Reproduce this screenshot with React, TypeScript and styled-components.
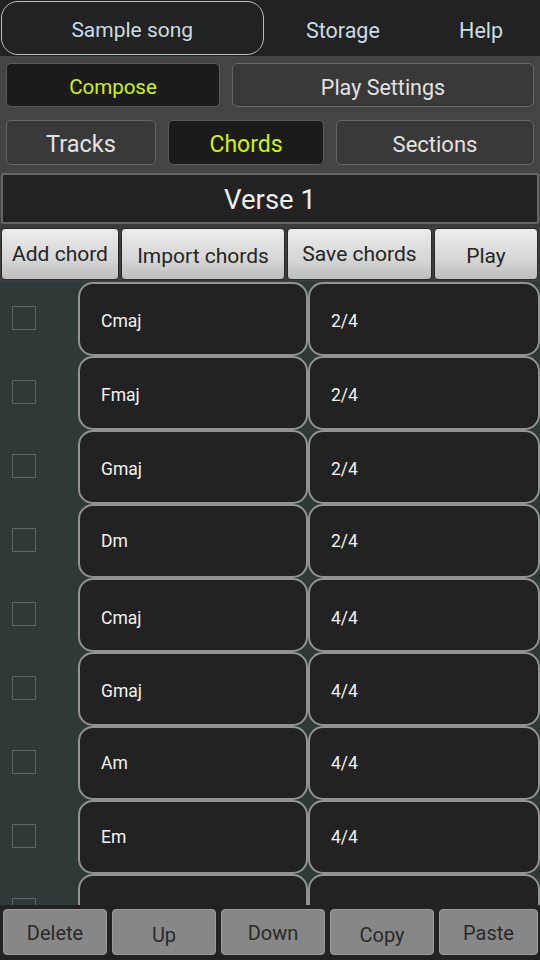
import React from "react";
import styled, { createGlobalStyle } from "styled-components";

const Global = createGlobalStyle`
  html, body { margin: 0; padding: 0; background: #222; }
  body { font-family: Roboto, "Noto Sans", "Liberation Sans", sans-serif; }
  * { box-sizing: border-box; }
`;

const Page = styled.div`
  width: 540px;
  height: 960px;
  display: flex;
  flex-direction: column;
  overflow: hidden;
  background: #222;
`;

const TopBar = styled.div`
  height: 56px;
  display: flex;
  align-items: stretch;
  background: #222;
  flex-shrink: 0;
`;

const SongBox = styled.div`
  width: 263px;
  margin: 1px 0 1px 1px;
  border: 1px solid #b4c0c4;
  border-radius: 17px;
  display: flex;
  align-items: center;
  justify-content: center;
  padding-top: 4px;
  color: #c8dde5;
  font-size: 21px;
`;

const TopItem = styled.div<{ $w: number }>`
  width: ${(p) => p.$w}px;
  display: flex;
  align-items: center;
  justify-content: center;
  padding-top: 5px;
  color: #c8dde5;
  font-size: 21.5px;
`;

const Panel = styled.div`
  background: #444;
  display: flex;
  flex-direction: column;
  flex-shrink: 0;
  padding-top: 7px;
`;

const TabRow = styled.div<{ $gap: number; $mb: number }>`
  display: flex;
  gap: ${(p) => p.$gap}px;
  padding: 0 6px;
  margin-bottom: ${(p) => p.$mb}px;
`;

const Tab = styled.div<{ $active?: boolean; $w?: number; $h: number; $fs: number; $dy: number }>`
  ${(p) => (p.$w ? `width: ${p.$w}px;` : "flex: 1;")}
  height: ${(p) => p.$h}px;
  border-radius: 5px;
  border: 1.5px solid ${(p) => (p.$active ? "#5a5a5a" : "#666")};
  background: ${(p) => (p.$active ? "#1b1b1b" : "#393939")};
  color: ${(p) => (p.$active ? "#d2f20a" : "#e2e2e2")};
  font-size: ${(p) => p.$fs}px;
  display: flex;
  align-items: center;
  justify-content: center;
  padding-top: ${(p) => p.$dy}px;
`;

const VerseBox = styled.div`
  margin: 0 1px;
  height: 51px;
  background: #222;
  border: 2px solid #666;
  border-radius: 3px;
  color: #eee;
  font-size: 27.5px;
  display: flex;
  align-items: center;
  justify-content: center;
  padding-top: 2px;
`;

const ActionRow = styled.div`
  display: flex;
  gap: 2px;
  padding: 4px 2px 2px 1px;
  background: #3c3c3c;
  flex-shrink: 0;
`;

const ActionButton = styled.div<{ $w?: number; $dy: number }>`
  ${(p) => (p.$w ? `width: ${p.$w}px;` : "flex: 1;")}
  height: 52px;
  border-radius: 4px;
  border: 1px solid #2a2a2a;
  background: linear-gradient(#ececec, #d6d6d6 60%, #bdbdbd);
  color: #252525;
  font-size: 21px;
  display: flex;
  align-items: center;
  justify-content: center;
  padding-top: ${(p) => p.$dy}px;
`;

const List = styled.div`
  flex: 1;
  overflow: hidden;
  background: #2e3938;
`;

const Row = styled.div`
  display: grid;
  grid-template-columns: 78px 230px 1fr;
  height: 74px;
`;

const CheckCell = styled.div`
  display: flex;
  align-items: center;
  padding-left: 12px;
  padding-bottom: 3px;
`;

const Checkbox = styled.div`
  width: 24px;
  height: 24px;
  border: 1.5px solid #5b6564;
`;

const Cell = styled.div<{ $pl: number; $dy: number }>`
  border: 2px solid #929292;
  border-radius: 15px;
  background: #222;
  color: #f2f2f2;
  font-size: 17.5px;
  display: flex;
  align-items: center;
  padding-left: ${(p) => p.$pl}px;
  padding-top: ${(p) => p.$dy}px;
`;

const BottomBar = styled.div`
  height: 55px;
  flex-shrink: 0;
  background: #222;
  display: flex;
  gap: 5px;
  padding: 4px 2px 5px 3px;
`;

const BottomButton = styled.div<{ $w?: number; $dy: number }>`
  ${(p) => (p.$w ? `width: ${p.$w}px;` : "flex: 1;")}
  border-radius: 4px;
  border: 1px solid #9c9c9c;
  background: #878787;
  color: #2a2a2a;
  font-size: 20px;
  display: flex;
  align-items: center;
  justify-content: center;
  padding-top: ${(p) => p.$dy}px;
`;

const rows: [string, string, number][] = [
  ["Cmaj", "2/4", 3],
  ["Fmaj", "2/4", 3],
  ["Gmaj", "2/4", 3],
  ["Dm", "2/4", -1],
  ["Cmaj", "4/4", 5],
  ["Gmaj", "4/4", 3],
  ["Am", "4/4", -1],
  ["Em", "4/4", -1],
  ["", "", 0],
];

export default function App() {
  return (
    <Page>
      <Global />
      <TopBar>
        <SongBox>Sample song</SongBox>
        <TopItem $w={159}>Storage</TopItem>
        <TopItem $w={118}>Help</TopItem>
      </TopBar>
      <Panel>
        <TabRow $gap={12} $mb={13}>
          <Tab $active $w={214} $h={44} $fs={20.5} $dy={4}>Compose</Tab>
          <Tab $h={44} $fs={21.5} $dy={4}>Play Settings</Tab>
        </TabRow>
        <TabRow $gap={12} $mb={8}>
          <Tab $w={150} $h={45} $fs={23.5} $dy={3}>Tracks</Tab>
          <Tab $active $w={156} $h={45} $fs={23} $dy={3}>Chords</Tab>
          <Tab $h={45} $fs={22} $dy={3}>Sections</Tab>
        </TabRow>
        <VerseBox>Verse 1</VerseBox>
      </Panel>
      <ActionRow>
        <ActionButton $w={118} $dy={0}>Add chord</ActionButton>
        <ActionButton $w={164} $dy={4}>Import chords</ActionButton>
        <ActionButton $w={145} $dy={0}>Save chords</ActionButton>
        <ActionButton $dy={4}>Play</ActionButton>
      </ActionRow>
      <List>
        {rows.map(([chord, dur, dy], i) => (
          <Row key={i}>
            <CheckCell>
              <Checkbox />
            </CheckCell>
            <Cell $pl={21} $dy={dy}>{chord}</Cell>
            <Cell $pl={21} $dy={dy}>{dur}</Cell>
          </Row>
        ))}
      </List>
      <BottomBar>
        <BottomButton $w={104} $dy={1}>Delete</BottomButton>
        <BottomButton $w={104} $dy={5}>Up</BottomButton>
        <BottomButton $w={104} $dy={1}>Down</BottomButton>
        <BottomButton $w={104} $dy={5}>Copy</BottomButton>
        <BottomButton $dy={1}>Paste</BottomButton>
      </BottomBar>
    </Page>
  );
}
